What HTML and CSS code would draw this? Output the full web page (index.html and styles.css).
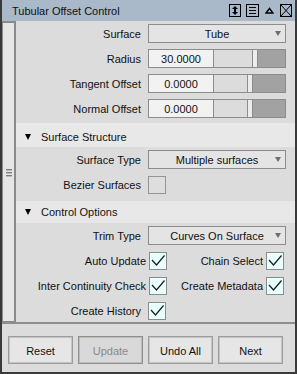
FILE: index.html
```html
<!DOCTYPE html>
<html>
<head>
<meta charset="utf-8">
<link rel="stylesheet" href="styles.css">
</head>
<body>
<div class="window">
  <div class="titlebar">
    <span class="title">Tubular Offset Control</span>
    <svg class="tb-icon i1" width="12" height="13" viewBox="0 0 12 13"><rect x="0.5" y="0.5" width="11" height="12" fill="none" stroke="#000"/><polygon points="3,5 6,2 9,5" fill="#000"/><polygon points="3,8 6,11 9,8" fill="#000"/><rect x="5" y="4" width="2" height="5" fill="#000"/></svg>
    <svg class="tb-icon i2" width="13" height="13" viewBox="0 0 13 13"><rect x="0.5" y="0.5" width="12" height="12" fill="none" stroke="#000"/><rect x="3" y="3" width="7" height="1" fill="#000"/><rect x="3" y="6" width="7" height="1" fill="#000"/><rect x="3" y="9" width="7" height="1" fill="#000"/></svg>
    <svg class="tb-icon i3" width="9" height="7" viewBox="0 0 9 7"><polygon points="1,6 4.5,1.5 8,6" fill="none" stroke="#000" stroke-width="1.4" stroke-linejoin="miter"/></svg>
    <svg class="tb-icon i4" width="12" height="13" viewBox="0 0 12 13"><rect x="0.5" y="0.5" width="11" height="12" fill="none" stroke="#000"/><line x1="1" y1="1" x2="11" y2="12" stroke="#000"/><line x1="11" y1="1" x2="1" y2="12" stroke="#000"/></svg>
  </div>
  <div class="main">
    <div class="handle">
      <div class="grip"><i></i><i></i><i></i></div>
    </div>
    <div class="content">
      <div class="form top">
        <span class="label">Surface</span>
        <div class="dropdown"><span></span><span class="dd-text">Tube</span><span class="arrow"></span></div>
        <span class="label">Radius</span>
        <div class="slider"><span class="num">30.0000</span><span class="track"><span class="light" style="width:38px"></span><span class="thumb"></span><span class="dark"></span></span></div>
        <span class="label">Tangent Offset</span>
        <div class="slider"><span class="num">0.0000</span><span class="track"><span class="light" style="width:33px"></span><span class="thumb"></span><span class="dark"></span></span></div>
        <span class="label">Normal Offset</span>
        <div class="slider"><span class="num">0.0000</span><span class="track"><span class="light" style="width:33px"></span><span class="thumb"></span><span class="dark"></span></span></div>
      </div>
      <div class="section-head h1"><span class="tri"></span><span>Surface Structure</span></div>
      <div class="form sec1">
        <span class="label">Surface Type</span>
        <div class="dropdown"><span></span><span class="dd-text">Multiple surfaces</span><span class="arrow"></span></div>
        <span class="label">Bezier Surfaces</span>
        <div class="ctl"><span class="cb"></span></div>
      </div>
      <div class="section-head h2"><span class="tri"></span><span>Control Options</span></div>
      <div class="form sec2">
        <span class="label">Trim Type</span>
        <div class="dropdown"><span></span><span class="dd-text">Curves On Surface</span><span class="arrow"></span></div>
        <div class="pair">
          <div class="cell"><span>Auto Update</span><span class="cb on"><svg width="16" height="16" viewBox="0 0 16 16"><path d="M2 7 L6.5 12 L14.5 2.5" fill="none" stroke="#1a1a1a" stroke-width="1.2"/></svg></span></div>
          <div class="cell"><span>Chain Select</span><span class="cb on"><svg width="16" height="16" viewBox="0 0 16 16"><path d="M2 7 L6.5 12 L14.5 2.5" fill="none" stroke="#1a1a1a" stroke-width="1.2"/></svg></span></div>
        </div>
        <div class="pair">
          <div class="cell"><span>Inter Continuity Check</span><span class="cb on"><svg width="16" height="16" viewBox="0 0 16 16"><path d="M2 7 L6.5 12 L14.5 2.5" fill="none" stroke="#1a1a1a" stroke-width="1.2"/></svg></span></div>
          <div class="cell"><span>Create Metadata</span><span class="cb on"><svg width="16" height="16" viewBox="0 0 16 16"><path d="M2 7 L6.5 12 L14.5 2.5" fill="none" stroke="#1a1a1a" stroke-width="1.2"/></svg></span></div>
        </div>
        <span class="label">Create History</span>
        <div class="ctl"><span class="cb on"><svg width="16" height="16" viewBox="0 0 16 16"><path d="M2 7 L6.5 12 L14.5 2.5" fill="none" stroke="#1a1a1a" stroke-width="1.2"/></svg></span></div>
      </div>
    </div>
  </div>
  <div class="buttonbar">
    <button class="btn">Reset</button>
    <button class="btn disabled">Update</button>
    <button class="btn">Undo All</button>
    <button class="btn">Next</button>
  </div>
</div>
</body>
</html>
```
FILE: styles.css
```css
* { box-sizing: border-box; }
body {
  margin: 0;
  font-family: "Liberation Sans", Arial, sans-serif;
  font-size: 11px;
  color: #111;
  background: #dcdcdc;
}
.window {
  width: 297px;
  height: 374px;
  border: 2px solid #3a3a3a;
  border-top: 0;
  background: #dcdcdc;
  display: flex;
  flex-direction: column;
}
.titlebar {
  height: 21px;
  flex: none;
  background: #a9b9ca;
  display: flex;
  align-items: center;
  padding: 0 3px 0 10px;
}
.title { flex: 1; color: #111; }
.tb-icon { display: block; flex: none; }
.i2 { margin-left: 5px; }
.i3 { margin-left: 6px; }
.i4 { margin-left: 6px; }

.main {
  height: 303px;
  flex: none;
  display: flex;
  border-bottom: 2px solid #8e8e8e;
}
.handle {
  width: 14px;
  flex: none;
  background: #e6e6e6;
  border: 2px solid #8a8a8a;
  border-left-width: 1px;
  border-bottom-width: 1px;
  display: flex;
  align-items: center;
  justify-content: center;
}
.grip { display: flex; flex-direction: column; gap: 2px; margin-left: 1px; }
.grip i { display: block; width: 6px; height: 1px; background: #7e7e7e; box-shadow: 0 1px 0 #bdbdbd; }

.content { flex: 1; display: flex; flex-direction: column; }
.form {
  display: grid;
  grid-template-columns: 125px 138px;
  column-gap: 7px;
  row-gap: 6px;
  grid-auto-rows: 19px;
  align-items: center;
}
.form.top { padding: 3px 0 5px; }
.form.sec1 { padding: 3px 0 7px; }
.form.sec2 { padding: 3px 0 2px; }
.label { text-align: right; white-space: nowrap; }

.section-head {
  background: #e8e8e8;
  display: flex;
  align-items: center;
  padding-left: 9px;
  gap: 10px;
}
.section-head.h1 { height: 24px; padding-top: 3px; }
.section-head.h2 { height: 22px; }
.tri {
  width: 0; height: 0;
  border-left: 3.5px solid transparent;
  border-right: 3.5px solid transparent;
  border-top: 6px solid #000;
}

.dropdown {
  height: 19px;
  border: 1px solid #8c8c8c;
  background: #e4e4e4;
  display: grid;
  grid-template-columns: 1fr auto 1fr;
  align-items: center;
}
.dd-text { text-align: center; white-space: nowrap; padding-top: 1px; }
.arrow {
  justify-self: end;
  margin-right: 4px;
  width: 0; height: 0;
  border-left: 3.5px solid transparent;
  border-right: 3.5px solid transparent;
  border-top: 5px solid #6e6e6e;
}

.slider { height: 19px; display: flex; }
.num {
  width: 66px;
  border: 1px solid #8c8c8c;
  background: #f2f2f2;
  display: flex;
  align-items: center;
  justify-content: center;
  padding-top: 1px;
}
.track {
  flex: 1;
  display: flex;
  border: 1px solid #8c8c8c;
  border-left: 0;
}
.light { background: #dcdcdc; flex: none; }
.thumb { width: 6px; flex: none; background: #ececec; border-left: 1px solid #8c8c8c; border-right: 1px solid #8c8c8c; }
.dark { flex: 1; background: #a2a2a2; }

.ctl { display: flex; align-items: center; }
.cb {
  width: 18px;
  height: 18px;
  border: 1px solid #959595;
  background: #dedede;
  display: block;
  flex: none;
}
.cb.on { background: #e8ffff; border-color: #8c8c8c; }
.cb svg { display: block; }

.pair {
  grid-column: 1 / -1;
  display: grid;
  grid-template-columns: 151px 117px;
  height: 19px;
}
.cell {
  display: flex;
  justify-content: flex-end;
  align-items: center;
  gap: 3px;
  white-space: nowrap;
}

.buttonbar {
  flex: 1;
  display: flex;
  gap: 5px;
  padding: 12px 0 0 6px;
}
.btn {
  width: 65px;
  height: 28px;
  margin: 0;
  padding: 2px 0 0;
  font-family: "Liberation Sans", Arial, sans-serif;
  font-size: 11px;
  color: #111;
  background: #e6e6e6;
  border: 1px solid #9c9c9c;
  box-shadow: inset 0 0 0 1px #c4c4c4;
}
.btn.disabled { background: #d9d9d9; color: #8a8a8a; border-color: #8e8e8e; box-shadow: inset 0 0 0 1px #bcbcbc; }
```
